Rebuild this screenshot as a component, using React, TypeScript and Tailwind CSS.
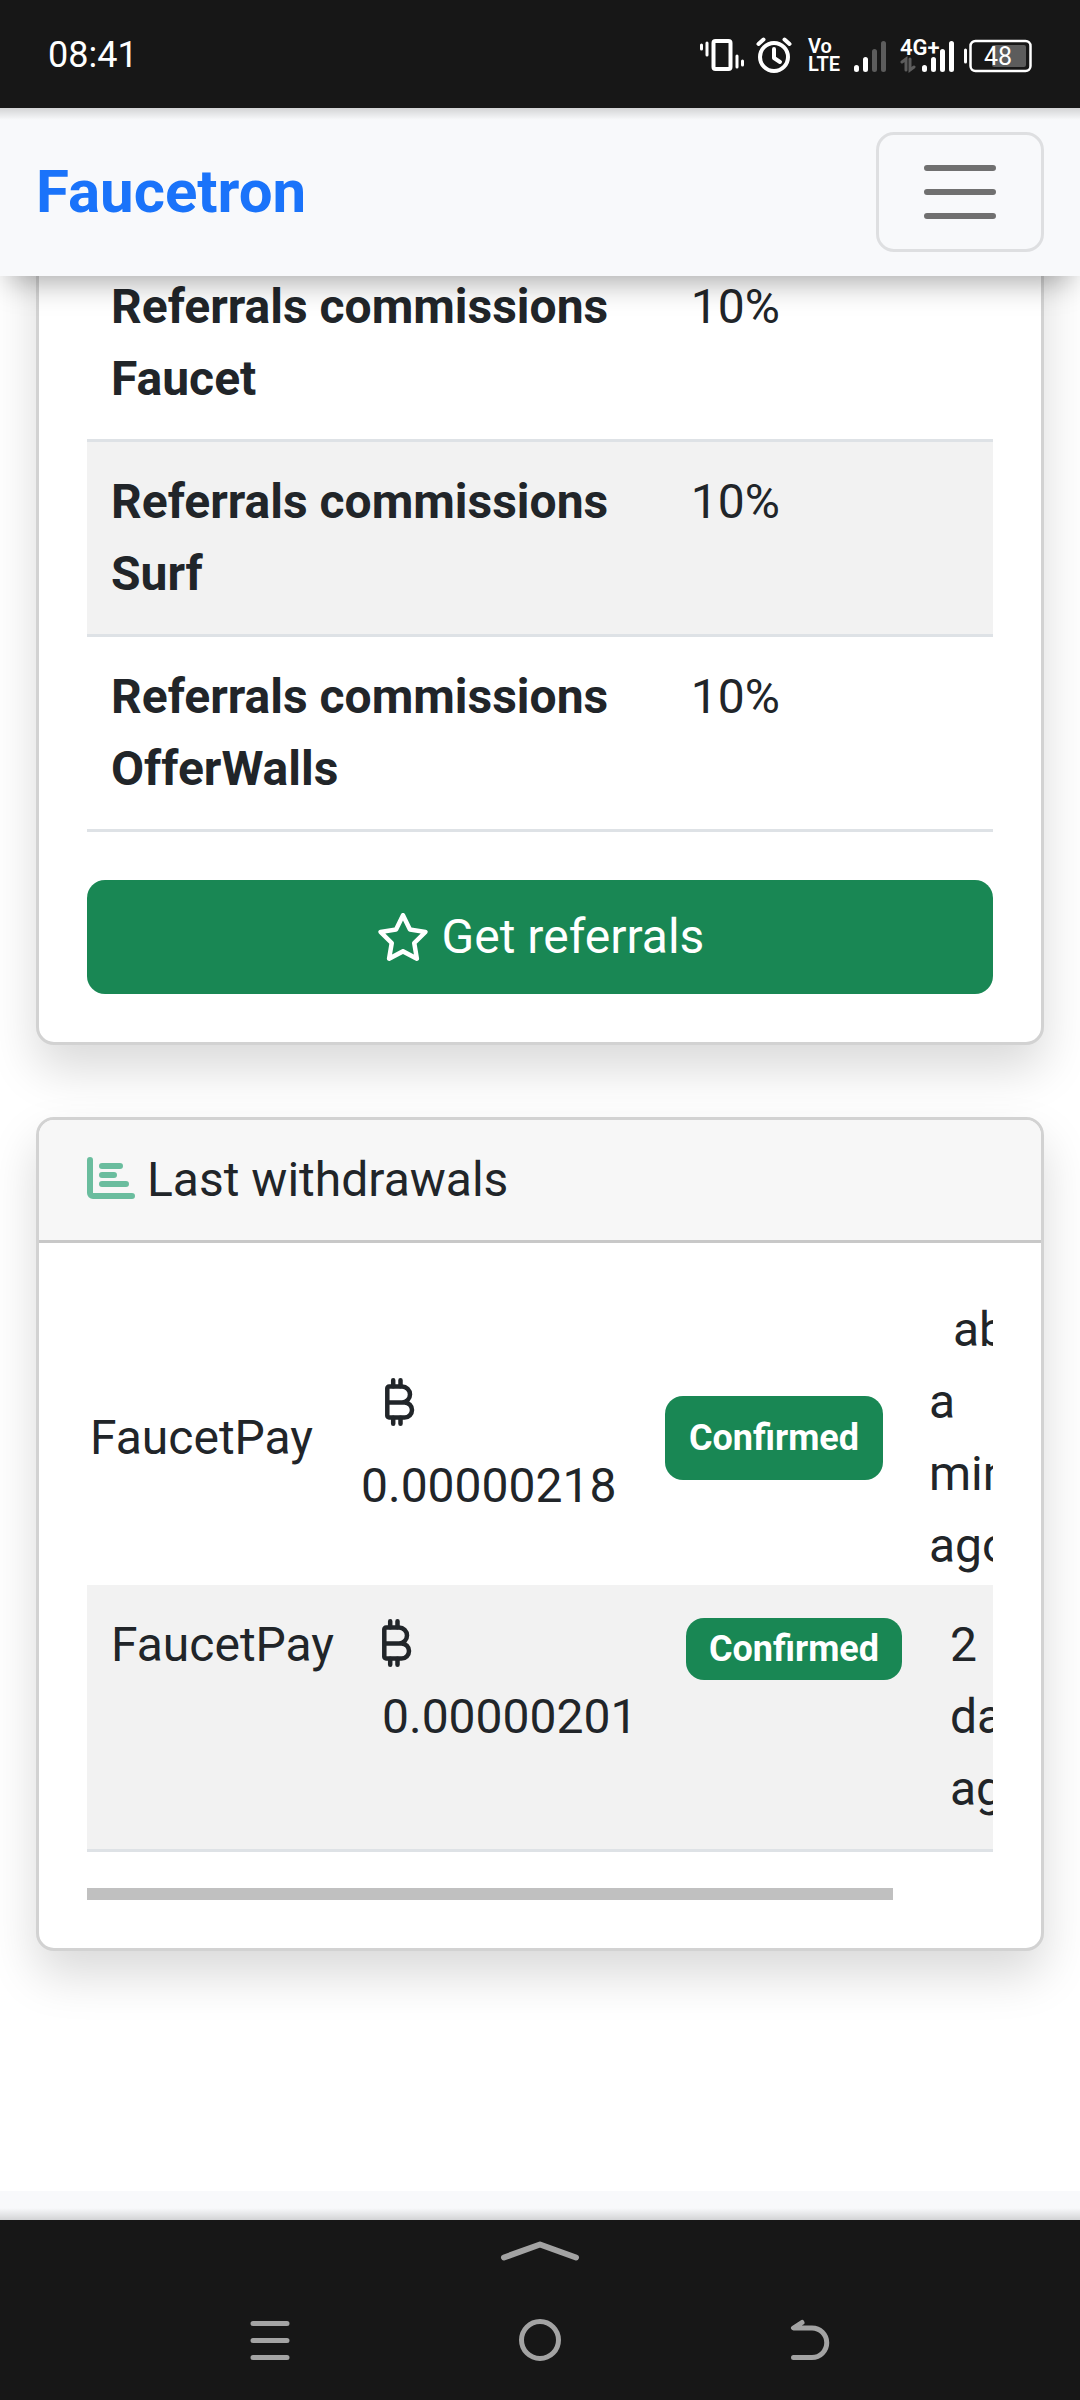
import React from 'react';
import { FaRegStar } from 'react-icons/fa6';
import clsx from 'clsx';

const commissions = [
  { name: 'Referrals commissions Faucet', value: '10%' },
  { name: 'Referrals commissions Surf', value: '10%' },
  { name: 'Referrals commissions OfferWalls', value: '10%' },
];

const VibrateIcon = () => (
  <svg className="w-11 h-9" viewBox="0 0 44 36" fill="none" stroke="white" strokeLinecap="round">
    <rect x="13.5" y="4" width="17" height="28" rx="2" strokeWidth="4" />
    <path d="M1.5 8v4M7 6v12M37 19v11M42.5 24v4" strokeWidth="3" />
  </svg>
);

const AlarmIcon = () => (
  <svg className="w-9 h-9" viewBox="0 0 36 36" fill="none" stroke="white" strokeLinecap="round" strokeLinejoin="round">
    <circle cx="18" cy="20" r="14" strokeWidth="4" />
    <path d="M18 12v9l6 4" strokeWidth="4" />
    <path d="M2.500 7l5-4.500M33.500 7l-5-4.500" strokeWidth="4" />
  </svg>
);

const VolteLabel = () => (
  <div className="flex w-8 flex-col text-xl leading-[18px] font-semibold">
    <span>Vo</span>
    <span>LTE</span>
  </div>
);

const SignalIcon = () => (
  <svg className="w-9 h-9" viewBox="0 0 36 36" fill="none" strokeWidth="5" strokeLinecap="round">
    <path d="M4.500 30.500v2M13.500 22.500v10" stroke="white" />
    <path d="M22.500 14.500v18M31.500 6.500v26" stroke="#5c5c5c" />
  </svg>
);

const MobileDataIcon = () => (
  <svg className="w-14 h-9" viewBox="0 0 56 36" fill="none" strokeLinecap="round">
    <text x="0" y="18" fill="white" fontSize="22" fontWeight="600" fontFamily="Roboto, sans-serif">4G+</text>
    <path d="M2 25l4-3v11M10 22v11l4-3" stroke="#5c5c5c" strokeWidth="3" />
    <path d="M24.500 30.500v2M33.500 22.500v10M42.500 14.500v18M51.500 6.500v26" stroke="white" strokeWidth="5" />
  </svg>
);

const BatteryIcon = () => (
  <svg className="w-17 h-9" viewBox="0 0 68 36" fill="none">
    <path d="M1.500 13v12" stroke="white" strokeWidth="3" strokeLinecap="round" />
    <rect x="28" y="8" width="34" height="22" rx="2" fill="#5c5c5c" />
    <rect x="6.500" y="4" width="60" height="30" rx="5" stroke="white" strokeWidth="2.500" />
    <text x="34" y="28" fill="white" fontSize="25" textAnchor="middle" fontFamily="Roboto, sans-serif">48</text>
  </svg>
);

const ChartIcon = () => (
  <svg className="mb-1 w-12 h-[42px]" viewBox="0 0 48 42" fill="none" stroke="#6abd9e" strokeWidth="6" strokeLinecap="round">
    <path d="M3 3v33a3 3 0 0 0 3 3h39" />
    <path d="M15 9h18M15 18h12M15 27h24" />
  </svg>
);

const BitcoinIcon = () => (
  <svg className="w-[30px] h-12" viewBox="0 0 30 48" fill="none" stroke="#212529" strokeWidth="4.500" strokeLinecap="round" strokeLinejoin="round">
    <path d="M17 8.500H4a1.700 1.700 0 0 0-1.700 1.700v27.600A1.700 1.700 0 0 0 4 39.500h15.500a7.500 7.500 0 0 0 0-15H2.500M17 8.500a8 8 0 0 1 0 16" />
    <path d="M8.200 2.300v6M15.500 2.300v6M8.200 39.700v6M15.500 39.700v6" />
  </svg>
);

const StatusBar = () => (
  <div className="relative z-20 flex h-27 items-center justify-between bg-[#171717] px-12 pt-px text-white">
    <span className="text-4xl leading-10">08:41</span>
    <div className="flex items-center gap-2">
      <div className="flex items-center gap-3">
        <VibrateIcon />
        <AlarmIcon />
      </div>
      <div className="flex items-center gap-3 pl-2">
        <VolteLabel />
        <SignalIcon />
        <MobileDataIcon />
      </div>
      <BatteryIcon />
    </div>
    <div className="absolute inset-x-0 top-full h-3 bg-linear-to-b from-black/15 to-transparent" />
  </div>
);

const Navbar = () => (
  <nav className="relative z-10 flex items-center justify-between bg-[#f8f9fb] px-9 py-6 shadow-[0_16px_28px_-10px_rgba(0,0,0,0.34)]">
    <a href="#home" className="text-6xl leading-[90px] font-bold text-[#1a73fa]">Faucetron</a>
    <button type="button" aria-label="Toggle navigation" className="rounded-[18px] border-3 border-black/10 px-9 py-3">
      <svg className="h-[90px] w-[90px]" viewBox="0 0 30 30" fill="none">
        <path d="M4 7h22M4 15h22M4 23h22" stroke="#707070" strokeWidth="2" strokeLinecap="round" />
      </svg>
    </button>
  </nav>
);

const Card = ({ className, children }: { className?: string; children: React.ReactNode }) => (
  <section className={clsx('rounded-[18px] border-3 border-[#d2d2d2] bg-white shadow-[0_24px_48px_rgba(0,0,0,0.15)]', className)}>
    {children}
  </section>
);

const Referrals = () => (
  <Card className="-mt-20 p-12">
    <table className="w-full table-fixed">
      <tbody>
        {commissions.map((row, i) => (
          <tr key={row.name} className={clsx('border-b-3 border-[#dee2e6]', i % 2 === 1 && 'bg-[#f2f2f2]')}>
            <th scope="row" className="w-[64%] p-6 text-left align-top font-bold">{row.name}</th>
            <td className="p-6 align-top">{row.value}</td>
          </tr>
        ))}
      </tbody>
    </table>
    <button type="button" className="mt-12 flex h-[114px] w-full items-center justify-center gap-3 rounded-[18px] bg-[#198754] text-white">
      <FaRegStar className="h-12 w-[54px]" />
      Get referrals
    </button>
  </Card>
);

const Withdrawals = () => (
  <Card className="mt-18">
    <h2 className="flex items-center gap-3 rounded-t-[15px] border-b-3 border-[#c8c8c8] bg-[#f7f7f7] px-12 py-6">
      <ChartIcon />
      Last withdrawals
    </h2>
    <div className="p-12">
      <div className="overflow-x-auto [scrollbar-width:none]">
        <table className="w-[1016px] table-fixed">
          <colgroup>
            <col className="w-[271px]" />
            <col className="w-[304px]" />
            <col className="w-[264px]" />
            <col className="w-[177px]" />
          </colgroup>
          <tbody>
            <tr className="align-middle">
              <td className="p-[3px]">FaucetPay</td>
              <td className="p-[3px]">
                <span className="flex p-6"><BitcoinIcon /></span>
                <span className="block">0.00000218</span>
              </td>
              <td className="p-[3px]">
                <span className="block w-[218px] rounded-[18px] bg-[#198754] py-6 text-center text-4xl leading-9 font-bold text-white">Confirmed</span>
              </td>
              <td className="p-[3px]"><span className="pl-6">about a minute ago</span></td>
            </tr>
            <tr className="border-b-3 border-[#dee2e6] bg-[#f2f2f2] align-top">
              <td className="p-6">FaucetPay</td>
              <td className="py-6 pl-6">
                <span className="flex h-18 items-center pb-1"><BitcoinIcon /></span>
                <span className="block">0.00000201</span>
              </td>
              <td className="py-6 pl-6">
                <span className="mt-[9px] block w-[216px] rounded-[18px] bg-[#198754] py-[13px] text-center text-4xl leading-9 font-bold text-white">Confirmed</span>
              </td>
              <td className="p-6">2 days ago</td>
            </tr>
          </tbody>
        </table>
      </div>
      <div className="mt-9 h-3 w-[89%] bg-[#c0c0c0]" />
    </div>
  </Card>
);

const SystemNav = () => (
  <div className="h-45 bg-[#171717] pt-5">
    <svg className="mx-auto h-6 w-20" viewBox="0 0 80 24" fill="none" stroke="#a3a3a3" strokeWidth="6" strokeLinecap="round" strokeLinejoin="round">
      <path d="M4 17.500L40 4.500l36 13" />
    </svg>
    <div className="mt-[52px] grid grid-cols-3 px-[12.5%]">
      <button type="button" aria-label="Recent apps" className="flex justify-center">
        <svg className="h-12 w-12" viewBox="0 0 48 48" fill="none" stroke="#a3a3a3" strokeWidth="5" strokeLinecap="round">
          <path d="M7 7.500h34M7 24.500h34M7 41.500h34" />
        </svg>
      </button>
      <button type="button" aria-label="Home" className="flex justify-center">
        <svg className="h-12 w-12" viewBox="0 0 48 48" fill="none" stroke="#a3a3a3" strokeWidth="5">
          <circle cx="24" cy="24" r="18.500" />
        </svg>
      </button>
      <button type="button" aria-label="Back" className="flex justify-center">
        <svg className="h-12 w-12" viewBox="0 0 48 48" fill="none" stroke="#a3a3a3" strokeWidth="5" strokeLinecap="round" strokeLinejoin="round">
          <path d="M16 6.500l-8.500 5.500h18.500a14.750 14.750 0 0 1 0 29.500h-18.500" />
        </svg>
      </button>
    </div>
  </div>
);

export default function App() {
  return (
    <div className="flex min-h-screen flex-col overflow-hidden bg-white font-['Roboto',sans-serif] text-5xl leading-[72px] text-[#212529]">
      <StatusBar />
      <Navbar />
      <main className="flex-1 px-9 pb-12">
        <Referrals />
        <Withdrawals />
      </main>
      <footer className="flex h-[29px] flex-col justify-end bg-[#f8f9fb]">
        <div className="h-3 bg-linear-to-t from-black/15 to-transparent" />
      </footer>
      <SystemNav />
    </div>
  );
}
